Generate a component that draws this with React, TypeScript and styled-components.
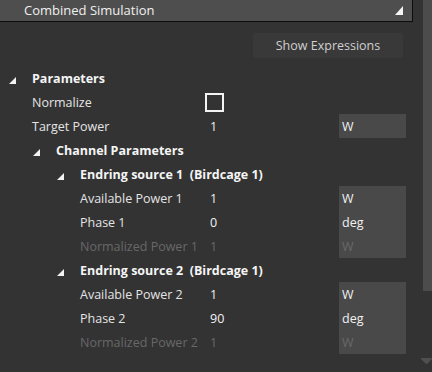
import React from 'react'
import styled, { createGlobalStyle } from 'styled-components'

const GlobalStyle = createGlobalStyle`
  html, body {
    margin: 0;
    padding: 0;
    background: #333333;
  }
  body {
    font-family: 'Open Sans', 'Noto Sans', sans-serif;
    font-size: 12.5px;
    color: #e8e8e8;
  }
`

interface Param {
  label: string
  level: number
  value?: string
  unit?: string
  disabled?: boolean
  checkbox?: boolean
}

interface Group {
  title: string
  level: number
  items: (Param | Group)[]
}

const tree: Group = {
  title: 'Parameters',
  level: 0,
  items: [
    { label: 'Normalize', level: 1, checkbox: true },
    { label: 'Target Power', level: 1, value: '1', unit: 'W' },
    {
      title: 'Channel Parameters',
      level: 1,
      items: [
        {
          title: 'Endring source 1  (Birdcage 1)',
          level: 2,
          items: [
            { label: 'Available Power 1', level: 3, value: '1', unit: 'W' },
            { label: 'Phase 1', level: 3, value: '0', unit: 'deg' },
            { label: 'Normalized Power 1', level: 3, value: '1', unit: 'W', disabled: true }
          ]
        },
        {
          title: 'Endring source 2  (Birdcage 1)',
          level: 2,
          items: [
            { label: 'Available Power 2', level: 3, value: '1', unit: 'W' },
            { label: 'Phase 2', level: 3, value: '90', unit: 'deg' },
            { label: 'Normalized Power 2', level: 3, value: '1', unit: 'W', disabled: true }
          ]
        }
      ]
    }
  ]
}

const Expander = () => (
  <svg width="8" height="8" viewBox="0 0 8 8">
    <polygon points="7,0 7,7 0,7" fill="#f2f2f2" />
  </svg>
)

const renderItems = (group: Group): React.ReactNode[] => {
  const rows: React.ReactNode[] = [
    <Row key={group.title}>
      <GroupLabel $level={group.level}>
        <Expander />
        <span>{group.title}</span>
      </GroupLabel>
    </Row>
  ]
  group.items.forEach(item => {
    if ('items' in item) {
      rows.push(...renderItems(item))
    } else {
      rows.push(
        <Row key={item.label}>
          <Label $level={item.level} $disabled={item.disabled}>
            {item.label}
          </Label>
          <Value $disabled={item.disabled}>
            {item.checkbox ? <Checkbox /> : item.value}
          </Value>
          {item.unit && <Unit $disabled={item.disabled}>{item.unit}</Unit>}
        </Row>
      )
    }
  })
  return rows
}

const App: React.FC = () => {
  return (
    <>
      <GlobalStyle />
      <Panel>
        <Content>
          <Header>
            <span>Combined Simulation</span>
            <HeaderCorner>
              <svg width="8" height="9" viewBox="0 0 8 9">
                <polygon points="8,0 8,9 0,9" fill="#f5f5f5" />
              </svg>
            </HeaderCorner>
          </Header>
          <Toolbar>
            <ShowButton>Show Expressions</ShowButton>
          </Toolbar>
          <Tree>{renderItems(tree)}</Tree>
        </Content>
        <ScrollBar>
          <Thumb />
          <ScrollArrow>
            <svg width="11" height="7" viewBox="0 0 11 7">
              <polygon points="0,0 11,0 11,1 6,6 5,6 0,1" fill="#4f4f4f" />
            </svg>
          </ScrollArrow>
        </ScrollBar>
      </Panel>
    </>
  )
}

export default App

const Panel = styled.div`
  display: grid;
  grid-template-columns: 413px 19px;
  width: 432px;
  height: 372px;
  overflow: hidden;
  background: #333333;
`

const Content = styled.div`
  display: flex;
  flex-direction: column;
`

const Header = styled.div`
  display: flex;
  align-items: center;
  justify-content: space-between;
  height: 21px;
  padding-left: 24px;
  padding-right: 9px;
  background: #4e4e4e;
  border-bottom: 1px solid #0c0c0c;
  border-right: 1px solid #0c0c0c;
  font-size: 13px;
  color: #f0f0f0;

  span {
    margin-top: -1px;
  }
`

const HeaderCorner = styled.span`
  display: flex;
  margin-top: 6px;
`

const Toolbar = styled.div`
  display: flex;
  justify-content: flex-end;
  padding: 11px 10px 8px 0;
`

const ShowButton = styled.button`
  width: 150px;
  height: 25px;
  border: none;
  border-radius: 3px;
  background: #393939;
  color: #cfcfcf;
  font-family: 'Open Sans', 'Noto Sans', sans-serif;
  font-size: 12.5px;
  padding: 0;
`

const Tree = styled.div`
  display: flex;
  flex-direction: column;
`

const Row = styled.div`
  display: grid;
  grid-template-columns: 210px 129px 67px;
  height: 24px;
  align-items: center;
`

const GroupLabel = styled.div<{ $level: number }>`
  grid-column: 1 / -1;
  display: flex;
  align-items: center;
  gap: 15px;
  padding-left: ${p => 9 + p.$level * 24}px;
  font-weight: 700;
  color: #f5f5f5;
  white-space: pre;

  svg {
    margin-top: 5px;
  }
`

const Label = styled.div<{ $level: number; $disabled?: boolean }>`
  padding-left: ${p => 8 + p.$level * 24}px;
  color: ${p => (p.$disabled ? '#686868' : '#e4e4e4')};
  white-space: nowrap;
  overflow: hidden;
`

const Value = styled.div<{ $disabled?: boolean }>`
  display: flex;
  align-items: center;
  color: ${p => (p.$disabled ? '#686868' : '#f2f2f2')};
`

const Checkbox = styled.span`
  display: block;
  width: 15px;
  height: 15px;
  margin-left: -5px;
  border: 2px solid #f4f4f4;
`

const Unit = styled.div<{ $disabled?: boolean }>`
  align-self: stretch;
  display: flex;
  align-items: center;
  padding-left: 3px;
  background: #494949;
  color: ${p => (p.$disabled ? '#686868' : '#f2f2f2')};
`

const ScrollBar = styled.div`
  display: flex;
  flex-direction: column;
  align-items: flex-end;
  justify-content: space-between;
  padding-bottom: 7px;
`

const Thumb = styled.div`
  width: 9px;
  height: 291px;
  background: #4c4c4c;
`

const ScrollArrow = styled.div`
  display: flex;
`
